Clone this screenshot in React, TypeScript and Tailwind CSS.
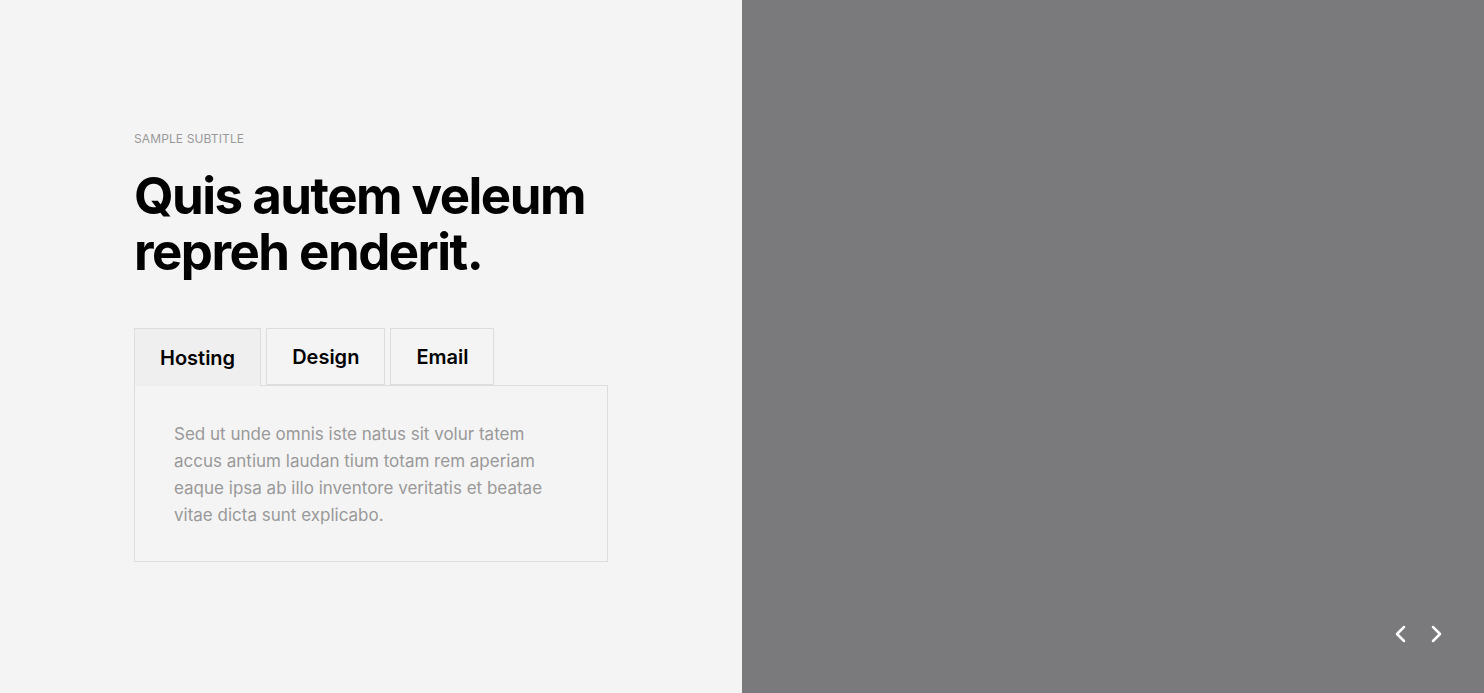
import React, { useState } from "react";

const tabs = ["Hosting", "Design", "Email"];

const App: React.FC = () => {
  const [active, setActive] = useState(0);

  return (
    <div className="flex h-[693px] w-full font-['Inter',sans-serif]">
      <section className="flex w-1/2 items-center bg-[#f4f4f4] pl-[134px]">
        <div className="w-[474px] -translate-y-px">
          <p className="text-[12px] uppercase tracking-[0.01em] text-[#999]">
            Sample subtitle
          </p>
          <h1 className="mt-[20px] text-[51px] font-bold leading-[56px] tracking-[-0.03em] text-black">
            Quis autem veleum
            <br />
            repreh enderit.
          </h1>
          <div className="mt-[48px]">
            <div className="flex gap-[5px]">
              {tabs.map((t, i) => (
                <button
                  key={t}
                  onClick={() => setActive(i)}
                  className={
                    i === active
                      ? "-mb-px h-[58px] border border-b-0 border-[#ddd] bg-[#efefef] px-[25px] pt-[1px] text-[20px] font-semibold text-black"
                      : "-mb-px h-[57px] border border-[#ddd] bg-[#f4f4f4] px-[25px] pt-[1px] text-[20px] font-semibold text-black"
                  }
                >
                  {t}
                </button>
              ))}
            </div>
            <div className="h-[177px] border border-[#ddd] px-[39px] pt-[35px]">
              <p className="text-[17px] leading-[27px] text-[#999]">
                Sed ut unde omnis iste natus sit volur tatem accus antium laudan
                tium totam rem aperiam eaque ipsa ab illo inventore veritatis et
                beatae vitae dicta sunt explicabo.
              </p>
            </div>
          </div>
        </div>
      </section>
      <section className="flex w-1/2 items-end justify-end bg-[#7a7a7c] pb-[49px] pr-[40px]">
        <div className="flex items-center gap-[19px] text-white">
          <button aria-label="Previous">
            <svg width="16" height="20" viewBox="0 0 16 20" fill="none">
              <path d="M11 3L4 10l7 7" stroke="currentColor" strokeWidth="2.5" strokeLinecap="round" strokeLinejoin="round" />
            </svg>
          </button>
          <button aria-label="Next">
            <svg width="16" height="20" viewBox="0 0 16 20" fill="none">
              <path d="M5 3l7 7-7 7" stroke="currentColor" strokeWidth="2.5" strokeLinecap="round" strokeLinejoin="round" />
            </svg>
          </button>
        </div>
      </section>
    </div>
  );
};

export default App;
